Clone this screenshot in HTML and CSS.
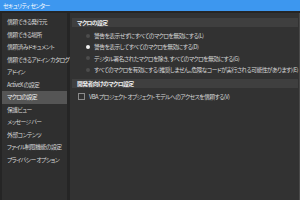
FILE: index.html
```html
<!DOCTYPE html>
<html lang="ja">
<head>
<meta charset="utf-8">
<link rel="stylesheet" href="styles.css">
</head>
<body>
<div class="window">
  <div class="titlebar">セキュリティ センター</div>
  <div class="main">
    <nav class="sidebar">
      <div class="item">信頼できる発行元</div>
      <div class="item">信頼できる場所</div>
      <div class="item">信頼済みドキュメント</div>
      <div class="item">信頼できるアドイン カタログ</div>
      <div class="item">アドイン</div>
      <div class="item">ActiveX の設定</div>
      <div class="item selected">マクロの設定</div>
      <div class="item">保護ビュー</div>
      <div class="item">メッセージ バー</div>
      <div class="item">外部コンテンツ</div>
      <div class="item">ファイル制限機能の設定</div>
      <div class="item">プライバシー オプション</div>
    </nav>
    <section class="content">
      <div class="band">マクロの設定</div>
      <div class="radios">
        <div class="radio"><span class="dot"></span><span>警告を表示せずにすべてのマクロを無効にする(<u>L</u>)</span></div>
        <div class="radio"><span class="dot on"></span><span>警告を表示してすべてのマクロを無効にする(<u>D</u>)</span></div>
        <div class="radio"><span class="dot"></span><span>デジタル署名されたマクロを除き、すべてのマクロを無効にする(<u>G</u>)</span></div>
        <div class="radio"><span class="dot"></span><span>すべてのマクロを有効にする (推奨しません。危険なコードが実行される可能性があります)(<u>E</u>)</span></div>
      </div>
      <div class="band">開発者向けのマクロ設定</div>
      <div class="check"><span class="box"></span><span>VBA プロジェクト オブジェクト モデルへのアクセスを信頼する(<u>V</u>)</span></div>
    </section>
  </div>
</div>
</body>
</html>
```
FILE: styles.css
```css
html, body {
  margin: 0;
  padding: 0;
  width: 300px;
  height: 200px;
  overflow: hidden;
  background: #252525;
}
.window {
  width: 300px;
  height: 200px;
  display: flex;
  flex-direction: column;
  font-family: "Noto Sans CJK JP", "Noto Sans", sans-serif;
  font-feature-settings: "palt";
  font-size: 5.8px;
  letter-spacing: -0.55px;
  color: #d6d6d6;
}
.titlebar {
  height: 11px;
  line-height: 11px;
  background: #3d97ef;
  color: #ffffff;
  padding-left: 3px;
  flex: none;
}
.main {
  flex: 1;
  display: flex;
  gap: 3px;
  padding-top: 2px;
  padding-left: 2px;
  min-height: 0;
}
.sidebar {
  width: 65px;
  background: #2f2f2f;
  padding-top: 3px;
  flex: none;
  display: flex;
  flex-direction: column;
}
.item {
  height: 12.5px;
  line-height: 12.5px;
  padding-left: 5px;
  white-space: nowrap;
}
.item.selected {
  background: #555555;
  color: #f0f0f0;
}
.content {
  flex: 1;
  background: #323232;
  border-right: 1px solid #4a4a4a;
  padding: 5px 1px 0 2px;
  display: flex;
  flex-direction: column;
}
.band {
  height: 9px;
  line-height: 9px;
  background: #3f3f3f;
  padding-left: 5px;
  color: #ececec;
  font-weight: bold;
}
.radios {
  display: flex;
  flex-direction: column;
  padding: 3px 0 4px 14px;
}
.radio {
  height: 11.3px;
  display: flex;
  align-items: center;
  gap: 4px;
  white-space: nowrap;
}
.dot {
  width: 4px;
  height: 4px;
  border-radius: 50%;
  background: #4c4c4c;
  flex: none;
}
.dot.on {
  background: #f2f2f2;
}
.check {
  display: flex;
  align-items: center;
  gap: 4px;
  padding: 5px 0 0 6px;
  height: 7px;
  white-space: nowrap;
}
.box {
  width: 5px;
  height: 5px;
  border: 1px solid #8a8a8a;
  flex: none;
}
u {
  text-decoration: none;
}
```
